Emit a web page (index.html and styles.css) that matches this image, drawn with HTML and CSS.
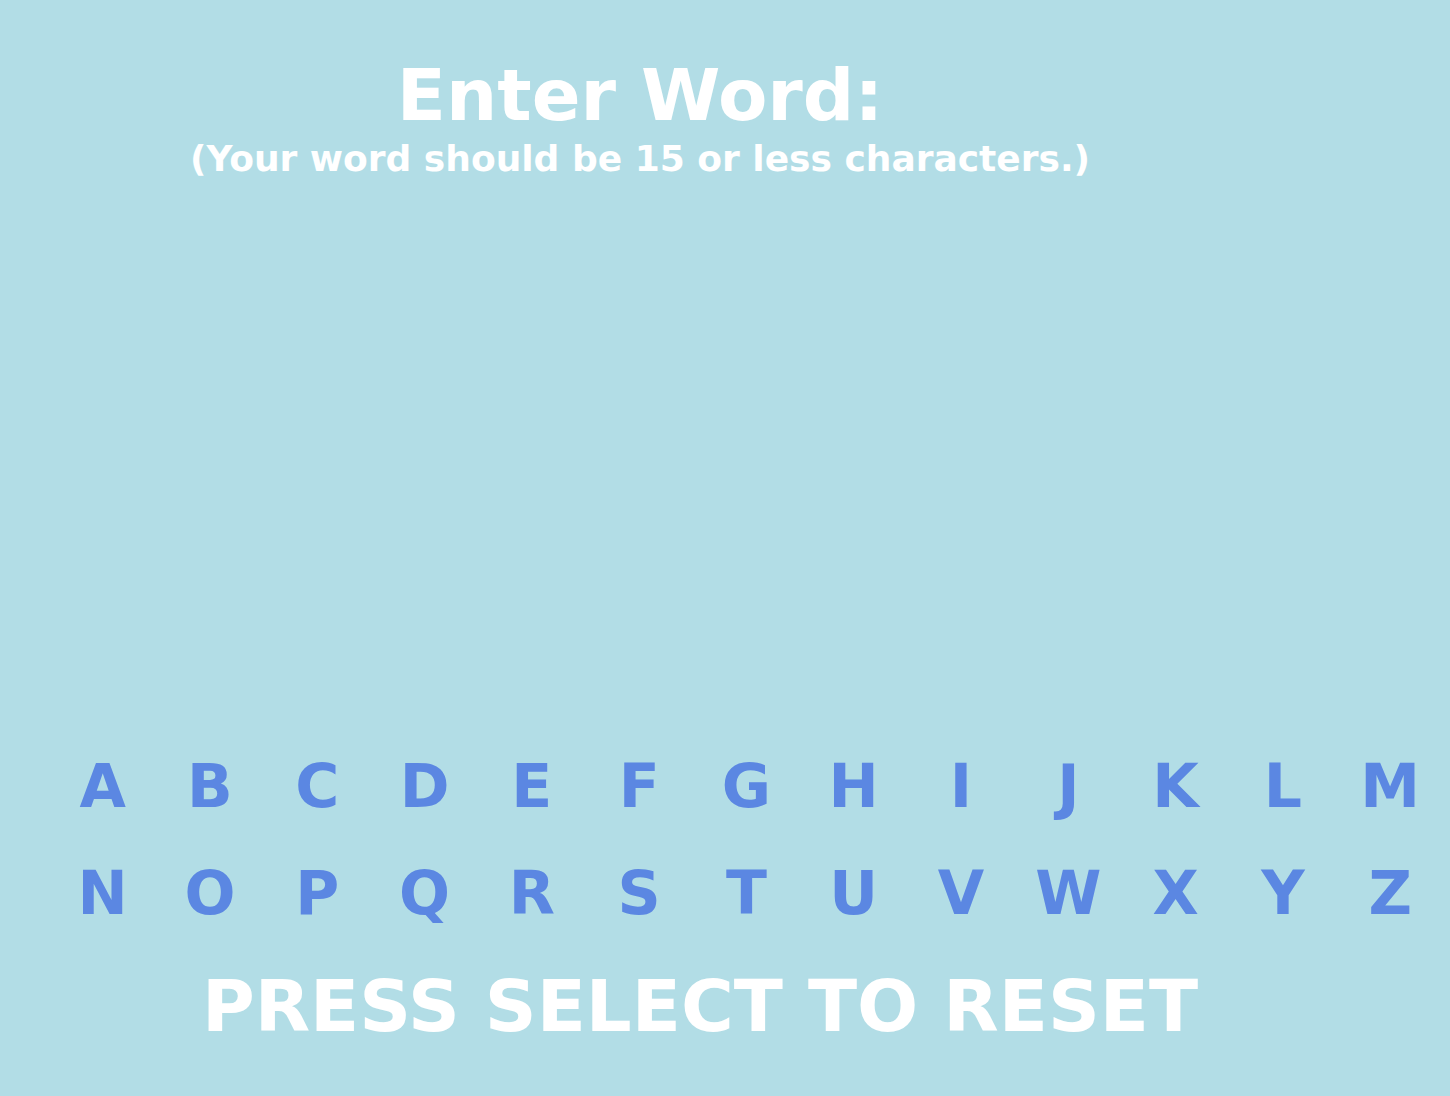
FILE: index.html
```html
<!DOCTYPE html>
<html>
<head>
<meta charset="utf-8">
<link rel="stylesheet" href="styles.css">
</head>
<body>
<div class="screen">
  <header class="head">
    <h1 class="title">Enter Word:</h1>
    <p class="subtitle">(Your word should be 15 or less characters.)</p>
  </header>
  <div class="keys">
    <span>A</span><span>B</span><span>C</span><span>D</span><span>E</span><span>F</span><span>G</span><span>H</span><span>I</span><span>J</span><span>K</span><span>L</span><span>M</span>
    <span>N</span><span>O</span><span>P</span><span>Q</span><span>R</span><span>S</span><span>T</span><span>U</span><span>V</span><span>W</span><span>X</span><span>Y</span><span>Z</span>
  </div>
  <div class="reset">PRESS SELECT TO RESET</div>
</div>
</body>
</html>
```
FILE: styles.css
```css
html, body {
  margin: 0;
  padding: 0;
  background: #b2dde6;
}
.screen {
  width: 1450px;
  height: 1096px;
  font-family: "DejaVu Sans", Verdana, sans-serif;
  font-weight: bold;
  color: #ffffff;
  display: flex;
  flex-direction: column;
  overflow: hidden;
}
.head {
  width: 1280px;
  text-align: center;
  padding-top: 59px;
}
.title {
  margin: 0;
  font-size: 72px;
  line-height: 72px;
  font-weight: bold;
}
.subtitle {
  margin: 10px 0 0;
  font-size: 36px;
  line-height: 36px;
}
.keys {
  margin-top: 579px;
  padding-left: 49px;
  display: grid;
  grid-template-columns: repeat(13, 107.3px);
  row-gap: 47px;
  color: #5b87e2;
  font-size: 60px;
  line-height: 60px;
}
.keys span {
  text-align: center;
}
.reset {
  width: 1400px;
  margin-top: 47px;
  text-align: center;
  font-size: 72px;
  line-height: 72px;
}
```
